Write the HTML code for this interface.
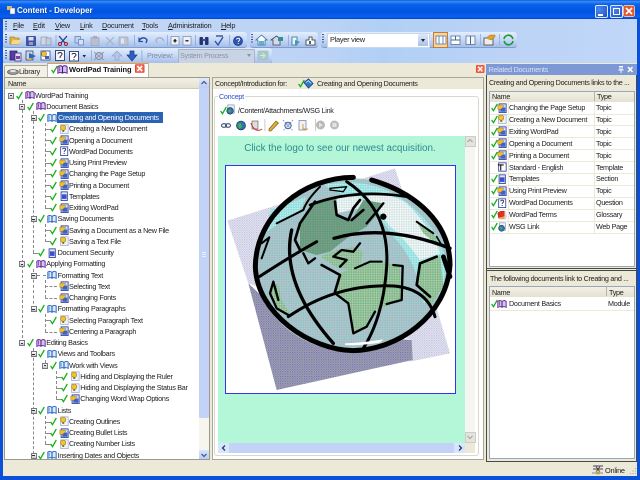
<!DOCTYPE html>
<html><head><meta charset="utf-8"><title>Content - Developer</title>
<style>
html,body{margin:0;padding:0;width:640px;height:480px;overflow:hidden;background:#ece9d8}
body{filter:blur(.25px)}
body,div,span{font-family:"Liberation Sans",sans-serif}
div,span,svg{position:absolute;display:block}
.t{font-size:7.2px;letter-spacing:-.27px;line-height:11px;color:#222;white-space:nowrap}
.r{left:0;width:195px;height:11px;top:calc(89.5px + var(--i)*11.25px)}
.l0{left:0}.l1{left:11.3px}.l2{left:22.6px}.l3{left:34px}.l4{left:45.3px}
.r .x{left:8px;top:3px;width:4px;height:4px;border:.7px solid #778;background:linear-gradient(#fff,#c8c8c0)}
.r .x:after{content:"";position:absolute;left:.8px;top:1.6px;width:2.4px;height:.8px;background:#333}
.r .c{left:15.5px;top:1px;width:7px;height:9px}
.r .i{left:24.5px;top:.5px;width:10px;height:10px}
.r .t{left:35px;top:0}
.r .sel{background:#2a62b4;color:#fff;width:105px;left:34.5px;padding-left:1px}
.d{border-left:.8px dashed #8a8a8a;width:0}
.dh{border-top:.8px dashed #8a8a8a;height:0}
.tb{background:linear-gradient(#e4eefc,#c6d9f6 50%,#a6bfea);border-radius:3px;height:15px;box-shadow:0 1px 0 #7f9ccc}
.g{width:2px;background:repeating-linear-gradient(#3b5a9a 0 1px,transparent 1px 2.5px)}
.m{top:20px;font-size:7.3px;letter-spacing:-.2px;line-height:11px;color:#222;white-space:nowrap}
.q{left:0;width:144px;height:12px;border-bottom:.6px solid #ece9d8}
.q .c{left:.5px;top:1.5px;width:7px;height:9px}
.q .i{left:6.5px;top:1px;width:10px;height:10px}
.q .t{left:19px;top:.5px}
.q .v{left:106px;top:.5px}
</style></head><body>
<svg width="0" height="0" style="position:absolute">
<defs>
<symbol id="ck" viewBox="0 0 8 10"><path d="M.7 5.5L2.8 8.6L7.2 1" fill="none" stroke="#17b017" stroke-width="1.5"/></symbol>
<symbol id="bk" viewBox="0 0 12 12"><path d="M1 3C3 1 5 2 6 3C7 2 9 1 11 3V10C9 9 7 9 6 10C5 9 3 9 1 10Z" fill="#d9c3ee" stroke="#6a2fa8" stroke-width="1.2"/><path d="M6 3V10" stroke="#2c2c5a" stroke-width="1.2"/><path d="M3 3V8" stroke="#b02ab0"/></symbol>
<symbol id="cn" viewBox="0 0 12 12"><path d="M1 2.5C3 1 5 2 6 3C7 2 9 1 11 2.5V10C9 9 7 9 6 10C5 9 3 9 1 10Z" fill="#dceaff" stroke="#2a6cc4" stroke-width="1.2"/><path d="M6 3V10" stroke="#1c4f98" stroke-width="1.2"/><path d="M2.6 3V8" stroke="#4a94e0"/></symbol>
<symbol id="y" viewBox="0 0 12 12"><rect x="2" y="1" width="9" height="10.5" fill="#eef3fb" stroke="#8ba5d0" stroke-width=".8"/><circle cx="5" cy="4.5" r="3.2" fill="#f2c230" stroke="#a87f10" stroke-width=".7"/><rect x="4" y="7.5" width="2.2" height="2" fill="#7a6a30"/></symbol>
<symbol id="b" viewBox="0 0 12 12"><rect x="2.5" y="1" width="8.5" height="10.5" fill="#cfdcf4" stroke="#31429c" stroke-width="1"/><rect x="4" y="5.5" width="6" height="5" fill="#3d62c8"/><path d="M1 2.5H7.5V5L4.5 7.5H1Z" fill="#f0be30" stroke="#8a6a12" stroke-width=".5"/></symbol>
<symbol id="p" viewBox="0 0 12 12"><rect x="2" y="1" width="8.5" height="10.5" fill="#fff" stroke="#31429c" stroke-width="1"/><path d="M4.4 4C4.6 2.2 8 2.2 8 4.2C8 5.6 6.2 5.6 6.2 7M6.2 8.2V9.6" fill="none" stroke="#2a2a70" stroke-width="1.1"/></symbol>
<symbol id="s" viewBox="0 0 12 12"><rect x="2.5" y="1" width="7.5" height="10.5" fill="#dfe7fa" stroke="#2d3e9c" stroke-width="1"/><rect x="3.5" y="4" width="5.5" height="5.5" fill="#3a4fd0"/></symbol>
<symbol id="w" viewBox="0 0 12 12"><rect x="3" y="1" width="7" height="9" fill="#eef" stroke="#7a8ab0" stroke-width=".7"/><circle cx="5.5" cy="7.5" r="3.6" fill="#2a74b8" stroke="#123" stroke-width=".6"/><path d="M3.5 6.5L6 6L6.5 8.5L4.5 9.5Z" fill="#4cae4c"/></symbol>
<symbol id="gl" viewBox="0 0 12 12"><path d="M1 4C2 1 9 1 10 2L11 8C9 7 4 8 2 10Z" fill="#e53020" stroke="#801010" stroke-width=".5"/><rect x="3" y="8.5" width="8" height="2.5" fill="#f0a040"/><rect x="9" y="1" width="2" height="10" fill="#ddd"/></symbol>
<symbol id="cl" viewBox="0 0 10 9"><rect width="10" height="9" rx="1" fill="#e8432a"/><rect x="1" y="1" width="8" height="7" fill="#f7f2f0" opacity=".25"/><path d="M2.5 1.8L7.5 7.2M7.5 1.8L2.5 7.2" stroke="#fff" stroke-width="1.6"/></symbol>
<pattern id="pO" width="7.2" height="7.2" patternUnits="userSpaceOnUse"><rect width="7.2" height="7.2" fill="#a9c7c9"/><rect x="0" y="0" width="3" height="3" fill="#c4b9cf"/><rect x="3.6" y="3.6" width="3" height="3" fill="#72bfc2"/></pattern>
<pattern id="pC" width="7.2" height="7.2" patternUnits="userSpaceOnUse"><rect width="7.2" height="7.2" fill="#a3e5e4"/><rect x="0" y="0" width="3" height="3" fill="#cdeff0"/><rect x="3.6" y="3.6" width="3" height="3" fill="#6fd6d8"/></pattern>
<pattern id="pL" width="7.2" height="7.2" patternUnits="userSpaceOnUse"><rect width="7.2" height="7.2" fill="#97c39c"/><rect x="0" y="0" width="3" height="3" fill="#bcc9b2"/><rect x="3.6" y="3.6" width="3" height="3" fill="#55b070"/></pattern>
<pattern id="pD" width="7.2" height="7.2" patternUnits="userSpaceOnUse"><rect width="7.2" height="7.2" fill="#6f9c86"/><rect x="0" y="0" width="3" height="3" fill="#8a9a90"/><rect x="3.6" y="3.6" width="3" height="3" fill="#45a060"/></pattern>
<pattern id="pW" width="7.2" height="7.2" patternUnits="userSpaceOnUse"><rect width="7.2" height="7.2" fill="#e8efef"/><rect x="0" y="0" width="3" height="3" fill="#fff"/><rect x="3.6" y="3.6" width="3" height="3" fill="#b8d8d8"/></pattern>
<pattern id="pS" width="7.2" height="7.2" patternUnits="userSpaceOnUse"><rect width="7.2" height="7.2" fill="#eaeaf4"/><rect x="0" y="0" width="3.4" height="3.4" fill="#b8b8d8"/><rect x="3.6" y="3.6" width="3.4" height="3.4" fill="#c8c8e4"/></pattern>
<pattern id="pT" width="7.2" height="7.2" patternUnits="userSpaceOnUse"><rect width="7.2" height="7.2" fill="#a4a4c0"/><rect x="0" y="0" width="3.4" height="3.4" fill="#6c6ca8"/><rect x="3.6" y="3.6" width="3.4" height="3.4" fill="#888892"/></pattern>
</defs></svg>

<!-- window frame / title -->
<div style="left:0;top:0;width:640px;height:480px;background:#0a50d8"></div>
<div style="left:0;top:0;width:640px;height:19px;background:linear-gradient(#0a58e0,#3a8cf6 8%,#0a62ea 22%,#0054e0 60%,#0a60ee 90%,#0040c8)"></div>
<svg style="left:6px;top:5px;width:10px;height:10px" viewBox="0 0 10 10"><rect x="1" y="1" width="5" height="4" fill="#d8c070"/><rect x="4" y="3" width="5" height="6" fill="#fff" stroke="#667" stroke-width=".5"/></svg>
<div style="left:17px;top:5px;font-size:8px;letter-spacing:-.02px;line-height:12px;color:#fff;font-weight:bold;white-space:nowrap;text-shadow:.5px .5px 0 #0a3a9a">Content - Developer</div>
<div style="left:595px;top:5px;width:11px;height:11px;border:.7px solid #dfe8fb;border-radius:2px;background:radial-gradient(circle at 30% 30%,#4f86ea,#1c50c8)"><div style="left:2px;top:7.5px;width:5px;height:2px;background:#fff"></div></div>
<div style="left:610px;top:5px;width:11px;height:11px;border:.7px solid #dfe8fb;border-radius:2px;background:radial-gradient(circle at 30% 30%,#4f86ea,#1c50c8)"><div style="left:2px;top:2px;width:5.4px;height:5.4px;border:1px solid #fff;border-top-width:1.6px"></div></div>
<svg style="left:623px;top:5px;width:12px;height:12px" viewBox="0 0 12 12"><rect x=".4" y=".4" width="11.2" height="11.2" rx="2" fill="#de5a30" stroke="#f4e4dc" stroke-width=".7"/><path d="M3 3L9 9M9 3L3 9" stroke="#fff" stroke-width="1.6"/></svg>

<!-- toolbar area -->
<div style="left:3px;top:19px;width:634px;height:44px;background:linear-gradient(90deg,#c6d9f7 0,#bcd3f5 50%,#b1cff5 60%,#bcd3f6 80%,#c0d7f8 100%)"></div>
<div class="g" style="left:5px;top:21px;height:9px"></div>
<div class="m" style="left:13px"><u>F</u>ile</div>
<div class="m" style="left:33px"><u>E</u>dit</div>
<div class="m" style="left:55px"><u>V</u>iew</div>
<div class="m" style="left:80px"><u>L</u>ink</div>
<div class="m" style="left:102px"><u>D</u>ocument</div>
<div class="m" style="left:142px"><u>T</u>ools</div>
<div class="m" style="left:168px"><u>A</u>dministration</div>
<div class="m" style="left:221px"><u>H</u>elp</div>

<div class="tb" style="left:3px;top:32px;width:244px"></div>
<div class="tb" style="left:250px;top:32px;width:68px"></div>
<div class="tb" style="left:321px;top:32px;width:196px"></div>
<div class="tb" style="left:3px;top:48px;width:269px"></div>
<div class="g" style="left:5px;top:34px;height:10px"></div>
<div class="g" style="left:251px;top:34px;height:10px"></div>
<div class="g" style="left:322px;top:34px;height:10px"></div>
<div class="g" style="left:5px;top:50px;height:10px"></div>

<!-- row 2 icons -->
<svg style="left:9px;top:34px;width:310px;height:13px" viewBox="9 34 310 13">
<path d="M10 37H14L15 38H19V44H10Z" fill="#e8b040" stroke="#8a6a20" stroke-width=".6"/><path d="M11 44L13 40H21L19 44Z" fill="#f8da80"/>
<rect x="26.500" y="36.500" width="9" height="9" fill="#3a55b0" stroke="#1a2a70" stroke-width=".6"/><rect x="28.500" y="37" width="5" height="3.500" fill="#dde"/><rect x="29" y="42" width="4" height="3" fill="#99b"/>
<rect x="41" y="37" width="6" height="8" fill="#d0d6e6" stroke="#8890a8" stroke-width=".6"/><rect x="46" y="38" width="5" height="7" fill="#c4cce0" stroke="#8890a8" stroke-width=".6"/>
<path d="M59 36L65 43M67 36L61 43" stroke="#23408f" stroke-width="1.300"/><circle cx="60" cy="44" r="1.500" fill="none" stroke="#a02020"/><circle cx="66" cy="44" r="1.500" fill="none" stroke="#a02020"/>
<rect x="75" y="36.500" width="5.500" height="6.500" fill="#c2d2ee" stroke="#5d78b8" stroke-width=".7"/><rect x="78.500" y="39.500" width="5" height="5.500" fill="#d8e2f4" stroke="#5d78b8" stroke-width=".7"/>
<rect x="91" y="37.500" width="8" height="8" fill="#b8bfcf" stroke="#98a0b4" stroke-width=".6"/><rect x="93" y="36" width="4" height="2.500" fill="#a4abbc"/>
<path d="M106 37L114 45M114 37L106 45" stroke="#a8b2c8" stroke-width="1.200"/>
<rect x="119" y="37" width="9" height="8" fill="#bcc4d6" stroke="#98a2b8" stroke-width=".6"/><rect x="121" y="38.500" width="3" height="5" fill="#e2e6ee"/>
<path d="M139 41C141 37 145 37 147 40L146 43" fill="none" stroke="#2a4ea8" stroke-width="1.400"/><path d="M139 37.500V41.500H143" fill="none" stroke="#2a4ea8" stroke-width="1.200"/>
<path d="M164 41C162 37 158 37 156 40L157 43" fill="none" stroke="#a6b2cc" stroke-width="1.400"/>
<rect x="171" y="36.500" width="8" height="8.500" fill="#eef1f8" stroke="#7788aa" stroke-width=".7"/><rect x="173.500" y="40" width="3" height="1.500" fill="#222"/><rect x="174.300" y="39" width="1.400" height="3.500" fill="#222"/>
<rect x="183" y="36.500" width="8" height="8.500" fill="#eef1f8" stroke="#7788aa" stroke-width=".7"/><rect x="185.500" y="40" width="3" height="1.500" fill="#333"/>
<rect x="199.500" y="37" width="3.500" height="8" rx="1" fill="#23336f"/><rect x="205" y="37" width="3.500" height="8" rx="1" fill="#23336f"/><rect x="202" y="39" width="4" height="2" fill="#3a4a90"/>
<path d="M215 41L218 45L223 37" fill="none" stroke="#2a4ea8" stroke-width="1.300"/><rect x="216" y="35" width="7" height="2" fill="#6a7ca8"/>
<circle cx="238" cy="41" r="4.500" fill="#2a54b8" stroke="#16306f" stroke-width=".7"/><path d="M236.500 39.500C236.500 37.800 239.800 37.800 239.800 39.700C239.800 40.800 238.200 40.800 238.200 42M238.200 43V44" fill="none" stroke="#fff" stroke-width=".9"/>
<path d="M258 45V40H256L261.500 35L267 40H265V45Z" fill="#fff" stroke="#2e6e9a" stroke-width=".8"/><rect x="259" y="41" width="5" height="3.500" fill="#59b5d0"/>
<path d="M273 45V40H271L276.500 36L282 40H280V45Z" fill="#d4dae8" stroke="#445" stroke-width=".8"/><path d="M278 37H283V41H278Z" fill="#2f8f9f"/>
<path d="M292 37H297V45H292Z" fill="#f0f4fa" stroke="#2b6e98" stroke-width=".8"/><path d="M295 40L300 42L295 45Z" fill="#30a0b0"/>
<path d="M306 40H309V37H312V40H315V45H306Z" fill="#fff" stroke="#333" stroke-width=".8"/><rect x="309" y="41" width="2" height="3" fill="#30687f"/>
<rect x="55.600" y="35" width=".8" height="11" fill="#8fa6d2"/><rect x="134" y="35" width=".8" height="11" fill="#8fa6d2"/><rect x="167" y="35" width=".8" height="11" fill="#8fa6d2"/><rect x="195" y="35" width=".8" height="11" fill="#8fa6d2"/><rect x="229" y="35" width=".8" height="11" fill="#8fa6d2"/><rect x="288" y="35" width=".8" height="11" fill="#8fa6d2"/>
</svg>

<!-- row 3 icons -->
<svg style="left:9px;top:49px;width:270px;height:14px" viewBox="9 49 270 14">
<rect x="10" y="51" width="7" height="9" fill="#5a3aa8" stroke="#1e1e50" stroke-width=".7"/><rect x="15" y="53" width="6" height="8" fill="#e4dcf2" stroke="#2a2a60" stroke-width=".7"/><rect x="16" y="56" width="4" height="3" fill="#8040a0"/>
<rect x="26" y="51" width="7" height="9" fill="#c8d4f0" stroke="#334" stroke-width=".7"/><path d="M29 53L36 56L29 60Z" fill="#2a68b8"/><rect x="28" y="58" width="3" height="2" fill="#e0b030"/>
<rect x="41" y="51" width="9" height="9" fill="#fff" stroke="#2a4a90" stroke-width=".8"/><circle cx="44" cy="54" r="2.600" fill="#f0c030" stroke="#7a6010" stroke-width=".5"/><rect x="45" y="56" width="4" height="3" fill="#3a5ec0"/>
<rect x="55.500" y="50.500" width="9" height="10" fill="#f4f6fb" stroke="#2a3a70" stroke-width=".9"/><path d="M58 54C58 52 62 52 62 54C62 56 60 55 60 58" fill="none" stroke="#334" stroke-width="1"/>
<rect x="69.500" y="51.500" width="9" height="9.500" fill="#fff" stroke="#2a3a70" stroke-width=".9"/><path d="M72 54.500C72 53 76 53 76 55C76 56.500 74 56 74 58M74 59V60" fill="none" stroke="#224" stroke-width="1"/>
<path d="M82.500 55H86L84.200 57.500Z" fill="#223"/>
<circle cx="99" cy="56" r="3.500" fill="#c6cfe0" stroke="#7c88a4" stroke-width="1"/><path d="M94 52L104 60M104 52L94 60" stroke="#8c98b4" stroke-width=".9"/>
<path d="M117 51L122 56H119V60H115V56H112Z" fill="#b7c6e4" stroke="#8fa3c8" stroke-width=".7"/>
<path d="M132 61L137 55H134V51H130V55H127Z" fill="#2d60c4" stroke="#1a3a88" stroke-width=".7"/>
<rect x="91" y="50" width=".8" height="11" fill="#8fa6d2"/><rect x="141.500" y="50" width=".8" height="11" fill="#8fa6d2"/>
<rect x="258" y="51" width="10" height="9" fill="#a8c8c8" stroke="#a4bcd4" stroke-width=".7"/><path d="M260 55.500H264M262.500 53L265 55.500L262.500 58" stroke="#d4ecd8" fill="none"/>
</svg>
<div class="m" style="left:147px;top:50px;color:#7f8a9e">Preview:</div>
<div style="left:178px;top:49px;width:75px;height:13px;background:#c8d4e6;border:.7px solid #a8b6ca"></div>
<div class="t" style="left:180px;top:50px;color:#8b93a2">System Process</div>
<div style="left:247px;top:54px;width:0;height:0;border:2.500px solid transparent;border-top:3px solid #8b93a2"></div>

<!-- Player view combo -->
<div style="left:327px;top:33px;width:101px;height:12.500px;background:#fff;border:.6px solid #c9d6ec"></div>
<div class="t" style="left:330px;top:34px;font-size:7.4px">Player view</div>
<div style="left:418px;top:33.500px;width:10px;height:12px;background:linear-gradient(#dfe9f9,#a9c0e6)"></div>
<div style="left:420.500px;top:38.500px;width:0;height:0;border:2.500px solid transparent;border-top:3px solid #222"></div>
<div style="left:433px;top:32px;width:13px;height:14px;border:.9px solid #c87a30;background:#f9d79a"></div>
<svg style="left:435px;top:34px;width:80px;height:12px" viewBox="435 34 80 12">
<rect x="436" y="36" width="10" height="8" fill="#fff" stroke="#55779f" stroke-width=".8"/><path d="M439 36V44M443 36V44" stroke="#6a8ab4"/>
<rect x="451" y="36" width="9" height="8.500" fill="#fff" stroke="#55779f" stroke-width=".8"/><path d="M451 40H460M455.500 36V40" stroke="#4a6890"/>
<rect x="466" y="36" width="9" height="8.500" fill="#f2f6fc" stroke="#55779f" stroke-width=".8"/><path d="M470.500 36V44.500" stroke="#4a6890"/>
<rect x="480" y="34" width=".7" height="11" fill="#8fa6d2"/>
<rect x="484" y="38" width="9" height="7" fill="#eee" stroke="#444" stroke-width=".8"/><path d="M486 38L490 35H495V37L491 40Z" fill="#e8a020" stroke="#764" stroke-width=".4"/>
<rect x="499" y="34" width=".7" height="11" fill="#8fa6d2"/>
<path d="M504 39A4.500 4.500 0 0 1 512 37L513 39" fill="none" stroke="#1c9a30" stroke-width="1.600"/><path d="M513 41A4.500 4.500 0 0 1 505 43L504 41" fill="none" stroke="#1c9a30" stroke-width="1.600"/>
</svg>

<!-- main beige -->
<div style="left:3px;top:63px;width:634px;height:413px;background:#ece9d8"></div>
<!-- tabs -->
<div style="left:4px;top:65px;width:43px;height:12px;background:#f3f1e6;border:.6px solid #a8a898;border-bottom:none;border-radius:2px 2px 0 0"></div>
<svg style="left:7px;top:67px;width:12px;height:9px" viewBox="0 0 12 9"><ellipse cx="6" cy="5" rx="5.500" ry="2.500" fill="#9a9a98" stroke="#444" stroke-width=".6"/><ellipse cx="6" cy="4" rx="3" ry="1" fill="#e8e8e8"/></svg>
<div class="t" style="left:19px;top:65.500px;font-size:7.500px">Library</div>
<div style="left:47px;top:62.500px;width:100px;height:15px;background:#fff;border-top:1.200px solid #e8a030;border-left:.6px solid #b8b8a8;border-right:.6px solid #b8b8a8"></div>
<svg style="left:51px;top:65px;width:7px;height:9px"><use href="#ck"/></svg>
<svg style="left:57px;top:64px;width:11px;height:11px"><use href="#bk"/></svg>
<div class="t" style="left:69px;top:63.500px;font-size:7.500px;letter-spacing:-.1px;font-weight:bold;color:#111">WordPad Training</div>
<svg style="left:135px;top:64px;width:9.500px;height:9px"><use href="#cl"/></svg>
<svg style="left:476px;top:65px;width:8.500px;height:8px"><use href="#cl"/></svg>

<!-- left tree pane -->
<div style="left:3.500px;top:77px;width:206px;height:383px;background:#fff;border:.7px solid #9a9a8c;box-sizing:border-box"></div>
<div style="left:4.500px;top:78px;width:194px;height:10px;background:linear-gradient(#f2f0e6,#e4e1d0);border-bottom:.6px solid #d0ccb8"></div>
<div class="t" style="left:8px;top:77.500px">Name</div>
<!-- scrollbar -->
<div style="left:198.500px;top:78px;width:10.500px;height:381px;background:#f6f5ee"></div>
<div style="left:198.500px;top:78px;width:10.500px;height:10px;background:linear-gradient(#e2ebfb,#b9cdf4)"></div>
<svg style="left:199.500px;top:79px;width:8px;height:8px" viewBox="0 0 8 8"><path d="M1.500 5L4 2.500L6.500 5" stroke="#4a5f90" fill="none" stroke-width="1.300"/></svg>
<div style="left:198.500px;top:88px;width:10.500px;height:330px;background:#c2d3f7;border-radius:1px"></div>
<div style="left:201.500px;top:252px;width:4px;height:.7px;background:#eef;box-shadow:0 2px 0 #eef,0 4px 0 #eef"></div>
<div style="left:198.500px;top:450px;width:10.500px;height:9px;background:linear-gradient(#d9e5fb,#b9cdf4)"></div>
<svg style="left:199.500px;top:451px;width:8px;height:8px" viewBox="0 0 8 8"><path d="M1.500 3L4 5.500L6.500 3" stroke="#4a5f90" fill="none" stroke-width="1.300"/></svg>

<!-- tree lines -->
<div class="d" style="left:22px;top:100px;height:243px"></div>
<div class="d" style="left:33.300px;top:111px;height:142px"></div>
<div class="dh" style="left:33.300px;top:253px;width:5px"></div>
<div class="d" style="left:33.300px;top:269px;height:40px"></div>
<div class="d" style="left:33.300px;top:348px;height:111px"></div>
<div class="d" style="left:44.500px;top:123px;height:85px"></div>
<div class="dh" style="left:44.500px;top:129px;width:6px"></div><div class="dh" style="left:44.500px;top:140px;width:6px"></div><div class="dh" style="left:44.500px;top:151px;width:6px"></div><div class="dh" style="left:44.500px;top:163px;width:6px"></div><div class="dh" style="left:44.500px;top:174px;width:6px"></div><div class="dh" style="left:44.500px;top:185px;width:6px"></div><div class="dh" style="left:44.500px;top:196px;width:6px"></div><div class="dh" style="left:44.500px;top:208px;width:6px"></div>
<div class="d" style="left:44.500px;top:224px;height:18px"></div>
<div class="dh" style="left:44.500px;top:230px;width:6px"></div><div class="dh" style="left:44.500px;top:241px;width:6px"></div>
<div class="d" style="left:44.500px;top:280px;height:18px"></div>
<div class="dh" style="left:44.500px;top:286px;width:12px"></div><div class="dh" style="left:44.500px;top:298px;width:12px"></div>
<div class="dh" style="left:37px;top:275px;width:9px"></div>
<div class="d" style="left:44.500px;top:314px;height:18px"></div>
<div class="dh" style="left:44.500px;top:320px;width:6px"></div><div class="dh" style="left:44.500px;top:332px;width:12px"></div>
<div class="d" style="left:44.500px;top:360px;height:6px"></div>
<div class="d" style="left:55.800px;top:371px;height:28px"></div>
<div class="dh" style="left:55.800px;top:377px;width:6px"></div><div class="dh" style="left:55.800px;top:388px;width:6px"></div><div class="dh" style="left:55.800px;top:399px;width:6px"></div>
<div class="d" style="left:44.500px;top:416px;height:28px"></div>
<div class="dh" style="left:44.500px;top:422px;width:6px"></div><div class="dh" style="left:44.500px;top:433px;width:6px"></div><div class="dh" style="left:44.500px;top:444px;width:6px"></div>

<!-- tree rows -->
<div class="r l0" style="--i:0"><div class="x"></div><svg class="c"><use href="#ck"/></svg><svg class="i"><use href="#bk"/></svg><span class="t">WordPad Training</span></div>
<div class="r l1" style="--i:1"><div class="x"></div><svg class="c"><use href="#ck"/></svg><svg class="i"><use href="#bk"/></svg><span class="t">Document Basics</span></div>
<div class="r l2" style="--i:2"><div class="x"></div><svg class="c"><use href="#ck"/></svg><svg class="i"><use href="#cn"/></svg><span class="t sel">Creating and Opening Documents</span></div>
<div class="r l3" style="--i:3"><svg class="c"><use href="#ck"/></svg><svg class="i"><use href="#y"/></svg><span class="t">Creating a New Document</span></div>
<div class="r l3" style="--i:4"><svg class="c"><use href="#ck"/></svg><svg class="i"><use href="#b"/></svg><span class="t">Opening a Document</span></div>
<div class="r l3" style="--i:5"><svg class="c"><use href="#ck"/></svg><svg class="i"><use href="#p"/></svg><span class="t">WordPad Documents</span></div>
<div class="r l3" style="--i:6"><svg class="c"><use href="#ck"/></svg><svg class="i"><use href="#b"/></svg><span class="t">Using Print Preview</span></div>
<div class="r l3" style="--i:7"><svg class="c"><use href="#ck"/></svg><svg class="i"><use href="#b"/></svg><span class="t">Changing the Page Setup</span></div>
<div class="r l3" style="--i:8"><svg class="c"><use href="#ck"/></svg><svg class="i"><use href="#b"/></svg><span class="t">Printing a Document</span></div>
<div class="r l3" style="--i:9"><svg class="c"><use href="#ck"/></svg><svg class="i"><use href="#s"/></svg><span class="t">Templates</span></div>
<div class="r l3" style="--i:10"><svg class="c"><use href="#ck"/></svg><svg class="i"><use href="#b"/></svg><span class="t">Exiting WordPad</span></div>
<div class="r l2" style="--i:11"><div class="x"></div><svg class="c"><use href="#ck"/></svg><svg class="i"><use href="#cn"/></svg><span class="t">Saving Documents</span></div>
<div class="r l3" style="--i:12"><svg class="c"><use href="#ck"/></svg><svg class="i"><use href="#b"/></svg><span class="t">Saving a Document as a New File</span></div>
<div class="r l3" style="--i:13"><svg class="c"><use href="#ck"/></svg><svg class="i"><use href="#y"/></svg><span class="t">Saving a Text File</span></div>
<div class="r l2" style="--i:14"><svg class="c"><use href="#ck"/></svg><svg class="i"><use href="#s"/></svg><span class="t">Document Security</span></div>
<div class="r l1" style="--i:15"><div class="x"></div><svg class="c"><use href="#ck"/></svg><svg class="i"><use href="#bk"/></svg><span class="t">Applying Formatting</span></div>
<div class="r l2" style="--i:16"><div class="x"></div><svg class="i"><use href="#cn"/></svg><span class="t">Formatting Text</span></div>
<div class="r l3" style="--i:17"><svg class="i"><use href="#b"/></svg><span class="t">Selecting Text</span></div>
<div class="r l3" style="--i:18"><svg class="i"><use href="#b"/></svg><span class="t">Changing Fonts</span></div>
<div class="r l2" style="--i:19"><div class="x"></div><svg class="c"><use href="#ck"/></svg><svg class="i"><use href="#cn"/></svg><span class="t">Formatting Paragraphs</span></div>
<div class="r l3" style="--i:20"><svg class="c"><use href="#ck"/></svg><svg class="i"><use href="#y"/></svg><span class="t">Selecting Paragraph Text</span></div>
<div class="r l3" style="--i:21"><svg class="i"><use href="#b"/></svg><span class="t">Centering a Paragraph</span></div>
<div class="r l1" style="--i:22"><div class="x"></div><svg class="c"><use href="#ck"/></svg><svg class="i"><use href="#bk"/></svg><span class="t">Editing Basics</span></div>
<div class="r l2" style="--i:23"><div class="x"></div><svg class="c"><use href="#ck"/></svg><svg class="i"><use href="#cn"/></svg><span class="t">Views and Toolbars</span></div>
<div class="r l3" style="--i:24"><div class="x"></div><svg class="c"><use href="#ck"/></svg><svg class="i"><use href="#cn"/></svg><span class="t">Work with Views</span></div>
<div class="r l4" style="--i:25"><svg class="c"><use href="#ck"/></svg><svg class="i"><use href="#y"/></svg><span class="t">Hiding and Displaying the Ruler</span></div>
<div class="r l4" style="--i:26"><svg class="c"><use href="#ck"/></svg><svg class="i"><use href="#y"/></svg><span class="t">Hiding and Displaying the Status Bar</span></div>
<div class="r l4" style="--i:27"><svg class="c"><use href="#ck"/></svg><svg class="i"><use href="#b"/></svg><span class="t">Changing Word Wrap Options</span></div>
<div class="r l2" style="--i:28"><div class="x"></div><svg class="c"><use href="#ck"/></svg><svg class="i"><use href="#cn"/></svg><span class="t">Lists</span></div>
<div class="r l3" style="--i:29"><svg class="c"><use href="#ck"/></svg><svg class="i"><use href="#y"/></svg><span class="t">Creating Outlines</span></div>
<div class="r l3" style="--i:30"><svg class="c"><use href="#ck"/></svg><svg class="i"><use href="#b"/></svg><span class="t">Creating Bullet Lists</span></div>
<div class="r l3" style="--i:31"><svg class="c"><use href="#ck"/></svg><svg class="i"><use href="#y"/></svg><span class="t">Creating Number Lists</span></div>
<div class="r l2" style="--i:32"><div class="x"></div><svg class="c"><use href="#ck"/></svg><svg class="i"><use href="#cn"/></svg><span class="t">Inserting Dates and Objects</span></div>

<!-- center pane -->
<div style="left:212px;top:77px;width:272px;height:383px;background:#fff;border:.7px solid #a8a898;box-sizing:border-box"></div>
<div style="left:213px;top:78px;width:270px;height:11px;background:#ece9d8"></div>
<div class="t" style="left:215px;top:78px">Concept/Introduction for:</div>
<svg style="left:298px;top:79px;width:7px;height:9px"><use href="#ck"/></svg>
<svg style="left:303px;top:77.500px;width:11px;height:11px" viewBox="0 0 12 12"><path d="M1 5L6 1L11 6L6 11Z" fill="#2a7ac8" stroke="#123a7a" stroke-width=".8"/><path d="M3 5L6 3L9 6" stroke="#bfe0f8" fill="none"/></svg>
<div class="t" style="left:317px;top:78px">Creating and Opening Documents</div>
<div style="left:214px;top:96px;width:265px;height:360px;border:.8px solid #d8d8cc;border-radius:3px;box-sizing:border-box"></div>
<div class="t" style="left:218px;top:90.500px;color:#2a4fd0;background:#fff;padding:0 1px">Concept</div>
<svg style="left:220px;top:106px;width:7px;height:9px"><use href="#ck"/></svg>
<svg style="left:224.500px;top:104px;width:11px;height:11px"><use href="#w"/></svg>
<div class="t" style="left:238px;top:105px">/Content/Attachments/WSG Link</div>
<svg style="left:220px;top:118px;width:125px;height:14px" viewBox="220 118 125 14">
<ellipse cx="224" cy="125.500" rx="2.500" ry="1.800" fill="none" stroke="#44507a" stroke-width="1.100"/><ellipse cx="228" cy="125.500" rx="2.500" ry="1.800" fill="none" stroke="#44507a" stroke-width="1.100"/>
<circle cx="241" cy="125.500" r="4.500" fill="#2a74b8" stroke="#113" stroke-width=".6"/><path d="M238 124L241 123L242 127L239 129Z" fill="#4cae4c"/>
<rect x="252" y="121" width="6" height="8" fill="#ddd" stroke="#555" stroke-width=".6"/><path d="M251 123C253 130 258 132 262 129" fill="none" stroke="#c83030" stroke-width="1"/>
<rect x="264.500" y="119" width=".8" height="12" fill="#c0c0b4"/>
<path d="M269 129L276 121L278.500 123L271 131H269Z" fill="#e8b030" stroke="#6a4a10" stroke-width=".6"/>
<circle cx="288" cy="125.500" r="3.200" fill="#d8e2f6" stroke="#44609a" stroke-width="1"/><path d="M283 120L293 131M293 120L283 131" stroke="#6080b8" stroke-width=".8" stroke-dasharray="1.500 1"/>
<rect x="299" y="120.500" width="7" height="9.500" fill="#f0f2f8" stroke="#6a7aa0" stroke-width=".7"/><path d="M303 124V129H308" fill="none" stroke="#d0a030" stroke-width="1"/>
<rect x="315" y="119" width=".8" height="12" fill="#c0c0b4"/>
<circle cx="320.500" cy="125" r="4.500" fill="#b8b8b8"/><path d="M319 122.500V127.500L323 125Z" fill="#e4e4e4"/>
<circle cx="334.500" cy="125" r="4.500" fill="#bcbcbc"/><rect x="332.500" y="123" width="4" height="4" fill="#e4e4e4"/>
</svg>

<!-- content frame -->
<div style="left:218px;top:136px;width:247px;height:307px;background:#b3f7d8"></div>
<div style="left:465px;top:136px;width:10px;height:307px;background:#f5f5f2"></div>
<div style="left:465px;top:136px;width:9px;height:9px;background:#e4e4dc;border:.5px solid #ccc"></div>
<svg style="left:466px;top:137px;width:8px;height:8px" viewBox="0 0 8 8"><path d="M1.500 5L4 2.500L6.500 5" stroke="#a8a898" fill="none" stroke-width="1.200"/></svg>
<div style="left:465px;top:432px;width:9px;height:9px;background:#e4e4dc;border:.5px solid #ccc"></div>
<svg style="left:466px;top:433px;width:8px;height:8px" viewBox="0 0 8 8"><path d="M1.500 3L4 5.500L6.500 3" stroke="#a8a898" fill="none" stroke-width="1.200"/></svg>
<div style="left:465px;top:443px;width:10px;height:10px;background:#ece9d8"></div>
<div style="left:218px;top:443px;width:247px;height:10px;background:#c2d3f7"></div>
<div style="left:218px;top:443px;width:11px;height:10px;background:#d9e5fb"></div>
<svg style="left:220px;top:444px;width:8px;height:8px" viewBox="0 0 8 8"><path d="M5 1.500L2.500 4L5 6.500" stroke="#25386c" fill="none" stroke-width="1.300"/></svg>
<div style="left:454px;top:443px;width:11px;height:10px;background:#d9e5fb"></div>
<svg style="left:455.500px;top:444px;width:8px;height:8px" viewBox="0 0 8 8"><path d="M3 1.500L5.500 4L3 6.500" stroke="#25386c" fill="none" stroke-width="1.300"/></svg>
<div style="left:219px;width:242px;text-align:center;font-size:9.850px;line-height:14px;top:141.500px;color:#2e8a8e;white-space:nowrap">Click the logo to see our newest acquisition.</div>
<div style="left:225px;top:164.500px;width:229px;height:227px;background:#fff;border:1.300px solid #3333f0"></div>

<!-- globe -->
<svg style="left:220px;top:160px;width:240px;height:240px" viewBox="0 0 720 720">
<polygon points="22,182 525,25 547,92 690,580 570,605 575,540 85,370" fill="url(#pS)"/>
<polygon points="85,370 170,690 578,600 575,540 300,520 170,450" fill="url(#pT)"/>
<ellipse cx="398" cy="315" rx="292" ry="260" fill="url(#pO)"/>
<path d="M310 75Q420 50 520 100Q640 170 680 300Q680 350 660 400L610 430Q590 300 520 230Q470 150 380 110Z" fill="url(#pC)"/>
<path d="M440 110Q500 90 560 130Q640 210 660 280L600 300Q540 220 510 200Q470 140 440 110Z" fill="url(#pW)"/>
<path d="M350 110L420 110L440 140L350 160Z" fill="url(#pW)"/>
<path d="M240 190L285 125L350 110L345 165L395 180L430 120L490 130L470 165L440 200L380 235L330 275L290 285L240 270Z" fill="url(#pD)"/>
<path d="M300 290L350 270L410 260L430 280L420 315L385 330L345 320Z" fill="url(#pL)" opacity=".9"/>
<path d="M350 395L360 340L450 300L540 315L545 420L470 450L440 500L400 525L385 440Z" fill="url(#pL)"/>
<path d="M600 310L660 285L670 380L630 440L590 375Z" fill="url(#pL)"/>
<path d="M145 395L175 370L185 420L215 470L170 445Z" fill="url(#pL)"/>
<path d="M590 185L640 215L660 260L610 220Z" fill="url(#pL)"/>
<path d="M150 150L260 110L240 150L140 215Z" fill="url(#pC)"/>
<g fill="none" stroke="#000" stroke-linecap="round" stroke-linejoin="round">
<path d="M400 52C250 52 108 165 106 320C110 460 270 570 400 572C530 570 680 470 690 315C690 190 590 100 455 60" stroke-width="15"/>
<path d="M118 350Q210 290 290 245" stroke-width="9"/>
<path d="M342 235Q500 190 690 265" stroke-width="10"/>
<path d="M270 135Q400 85 560 110" stroke-width="8"/>
<path d="M380 65Q510 150 500 320Q490 470 430 565" stroke-width="9"/>
<path d="M215 210Q180 370 340 550" stroke-width="10"/>
<path d="M205 470Q350 370 520 378Q620 385 645 470" stroke-width="9"/>
<path d="M240 190L225 240L240 270M240 190L285 125" stroke-width="8"/>
<path d="M345 125L350 165L385 180L400 145L420 120M395 180L430 150" stroke-width="8"/>
<path d="M300 80Q260 120 250 150L170 190" stroke-width="6"/>
<path d="M440 190L470 155L490 130" stroke-width="7"/>
<circle cx="490" cy="170" r="9" fill="#000"/>
<path d="M250 280L265 310L285 295" stroke-width="7"/>
<path d="M340 290L365 270L400 275L420 250M340 290L380 300L360 320" stroke-width="7"/>
<path d="M305 315L360 345L345 395" stroke-width="8"/>
<path d="M405 325L450 305L485 305" stroke-width="6"/>
<path d="M345 400L385 430L400 520L440 500L465 455" stroke-width="7"/>
<path d="M520 315L548 318L545 420L500 432" stroke-width="7"/>
<path d="M600 310L590 375L630 410M600 310L650 290" stroke-width="8"/>
<path d="M160 365L150 400L170 445L205 465M160 365L175 420" stroke-width="7"/>
<path d="M148 232L125 295M148 232L125 250" stroke-width="6"/>
<path d="M590 185L640 220" stroke-width="6"/>
<path d="M650 230L665 255" stroke-width="5"/>
<path d="M670 290L690 350" stroke-width="14"/>
<path d="M330 85L380 80L370 95L330 90Z" stroke-width="4"/>
</g>
<path d="M375 550Q430 548 490 538L480 548Q420 558 375 555Z" fill="#fff"/>
</svg>

<!-- right panels -->
<div style="left:486px;top:63.500px;width:150.500px;height:398px;background:#ece9d8;border:.9px solid #4a4a44;border-top:none;box-sizing:border-box"></div>
<div style="left:486px;top:63.500px;width:150.500px;height:11.500px;background:#7e98d6"></div>
<div class="t" style="left:488.500px;top:64px;color:#d8e0f4;font-size:7.300px">Related Documents</div>
<svg style="left:617px;top:65px;width:18px;height:9px" viewBox="0 0 18 9"><path d="M2 1.500H6M3 1.500V5M5 1.500V5M1.500 5H6.500M4 5V8" stroke="#fff" stroke-width=".9" fill="none"/><path d="M11 2L15.500 7M15.500 2L11 7" stroke="#fff" stroke-width="1.500"/></svg>
<div class="t" style="left:489px;top:77px">Creating and Opening Documents links to the ...</div>
<div style="left:489px;top:90.500px;width:145.500px;height:176px;background:#fff;border:.7px solid #98a8b8;box-sizing:border-box"></div>
<div style="left:490px;top:91.500px;width:144px;height:10px;background:linear-gradient(#f2f0e6,#e4e1d0)"></div>
<div class="t" style="left:492px;top:91px">Name</div><div style="left:594px;top:92px;width:.7px;height:9px;background:#b8b4a0"></div>
<div class="t" style="left:597px;top:91px">Type</div>
<div style="left:594px;top:102px;width:.6px;height:131px;background:#ece9d8"></div>
<div style="left:507.500px;top:102px;width:.6px;height:131px;background:#ece9d8"></div>
<div style="left:490px;top:101.500px;width:144px;height:160px">
<div class="q" style="top:0"><svg class="c"><use href="#ck"/></svg><svg class="i"><use href="#b"/></svg><span class="t">Changing the Page Setup</span><span class="t v">Topic</span></div>
<div class="q" style="top:11.900px"><svg class="c"><use href="#ck"/></svg><svg class="i"><use href="#y"/></svg><span class="t">Creating a New Document</span><span class="t v">Topic</span></div>
<div class="q" style="top:23.800px"><svg class="c"><use href="#ck"/></svg><svg class="i"><use href="#b"/></svg><span class="t">Exiting WordPad</span><span class="t v">Topic</span></div>
<div class="q" style="top:35.700px"><svg class="c"><use href="#ck"/></svg><svg class="i"><use href="#b"/></svg><span class="t">Opening a Document</span><span class="t v">Topic</span></div>
<div class="q" style="top:47.600px"><svg class="c"><use href="#ck"/></svg><svg class="i"><use href="#b"/></svg><span class="t">Printing a Document</span><span class="t v">Topic</span></div>
<div class="q" style="top:59.500px"><svg class="i" viewBox="0 0 12 12"><rect x="2" y="1" width="9" height="10" fill="#fff" stroke="#2a3a90"/><path d="M1 3.500H8M4.500 3.500V10" stroke="#111" stroke-width="1.300"/></svg><span class="t">Standard - English</span><span class="t v">Template</span></div>
<div class="q" style="top:71.400px"><svg class="c"><use href="#ck"/></svg><svg class="i"><use href="#s"/></svg><span class="t">Templates</span><span class="t v">Section</span></div>
<div class="q" style="top:83.300px"><svg class="c"><use href="#ck"/></svg><svg class="i"><use href="#b"/></svg><span class="t">Using Print Preview</span><span class="t v">Topic</span></div>
<div class="q" style="top:95.200px"><svg class="c"><use href="#ck"/></svg><svg class="i"><use href="#p"/></svg><span class="t">WordPad Documents</span><span class="t v">Question</span></div>
<div class="q" style="top:107.100px"><svg class="c"><use href="#ck"/></svg><svg class="i"><use href="#gl"/></svg><span class="t">WordPad Terms</span><span class="t v">Glossary</span></div>
<div class="q" style="top:119px"><svg class="c"><use href="#ck"/></svg><svg class="i"><use href="#w"/></svg><span class="t">WSG Link</span><span class="t v">Web Page</span></div>
</div>
<div style="left:487px;top:267.500px;width:149px;height:1px;background:#4a4a44"></div>
<div style="left:487px;top:269.500px;width:149px;height:.8px;background:#4a4a44"></div>
<div class="t" style="left:490px;top:272.500px">The following documents link to Creating and ...</div>
<div style="left:489px;top:285.500px;width:145.500px;height:173px;background:#fff;border:.7px solid #98a8b8;box-sizing:border-box"></div>
<div style="left:490px;top:286.500px;width:144px;height:10.500px;background:linear-gradient(#f2f0e6,#e4e1d0)"></div>
<div class="t" style="left:492px;top:286.500px">Name</div><div style="left:606px;top:287px;width:.7px;height:9px;background:#b8b4a0"></div>
<div class="t" style="left:609px;top:286.500px">Type</div>
<div style="left:490px;top:297.500px;width:144px;height:12px">
<div class="q" style="top:0"><svg class="c"><use href="#ck"/></svg><svg class="i"><use href="#bk"/></svg><span class="t">Document Basics</span><span class="t" style="left:118px;top:.5px">Module</span></div>
</div>

<!-- status -->
<svg style="left:592px;top:464px;width:12px;height:11px" viewBox="0 0 12 11"><path d="M1 2H11M1 5H11" stroke="#667" stroke-width="1.200"/><path d="M4 2.500L8 8M8 2.500L4 8" stroke="#334" stroke-width=".8"/><rect x="4" y="7.500" width="4" height="3" fill="#e8c020"/><path d="M0 9H11" stroke="#889" stroke-width="1"/></svg>
<div class="t" style="left:605px;top:464.500px;font-size:7.400px">Online</div>
<svg style="left:629px;top:467px;width:8px;height:8px" viewBox="0 0 8 8"><path d="M6.500 1V2M4 3.500V4.500M6.500 3.500V4.500M1.500 6V7M4 6V7M6.500 6V7" stroke="#a8a490" stroke-width="1.100"/></svg>
</body></html>
